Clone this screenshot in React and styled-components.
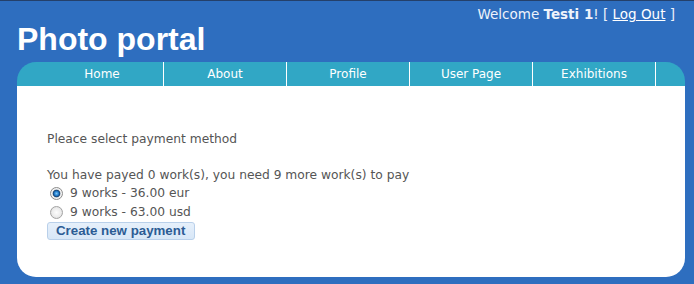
import React from "react";
import styled, { createGlobalStyle } from "styled-components";

const GlobalStyle = createGlobalStyle`
  html, body {
    margin: 0;
    padding: 0;
    background: #2e6ebf;
  }
  body {
    width: 694px;
    height: 284px;
    overflow: hidden;
    font-family: "DejaVu Sans", Verdana, sans-serif;
  }
`;

const Page = styled.div`
  box-sizing: border-box;
  width: 694px;
  height: 284px;
  border-top: 1px solid #24406a;
  background: #2e6ebf;
  padding: 0 9px 0 17px;
  display: flex;
  flex-direction: column;
`;

const Header = styled.header`
  height: 61px;
  display: flex;
  flex-direction: column;
`;

const Welcome = styled.div`
  margin-top: 5px;
  padding-right: 10px;
  text-align: right;
  font-size: 13.5px;
  line-height: 16px;
  color: #eef3fb;
`;

const LogOut = styled.a`
  color: #ffffff;
  text-decoration: underline;
`;

const Title = styled.h1`
  margin: 1px 0 0 0;
  font-family: "Liberation Sans", Arial, sans-serif;
  font-weight: bold;
  font-size: 32px;
  line-height: 32px;
  color: #ffffff;
`;

const Nav = styled.nav`
  height: 24px;
  background: #31a7c5;
  border-radius: 19px 19px 0 0;
  display: flex;
  padding-left: 24px;
`;

const Tab = styled.a`
  box-sizing: border-box;
  width: 123px;
  border-right: 1px solid #ffffff;
  text-align: center;
  font-size: 12px;
  line-height: 24px;
  color: #ffffff;
  text-decoration: none;
`;

const Content = styled.main`
  height: 191px;
  background: #ffffff;
  border-radius: 0 0 19px 19px;
  box-sizing: border-box;
  padding: 44px 30px 0 30px;
  color: #555555;
  font-size: 12.25px;
  line-height: 18px;
`;

const Para = styled.p`
  margin: 0 0 18px 0;
`;

const Line = styled.div`
  line-height: 18px;
`;

const RadioRow = styled.label`
  display: flex;
  align-items: center;
  height: 19px;
  line-height: 19px;
`;

const Radio = styled.input.attrs({ type: "radio" })`
  appearance: none;
  -webkit-appearance: none;
  box-sizing: border-box;
  width: 13px;
  height: 13px;
  margin: 0 7px 0 3px;
  border-radius: 50%;
  border: 1px solid #a3a3a3;
  background: radial-gradient(circle, #fdfdfd 0, #ececec 55%, #d2d2d2 100%);
  &:checked {
    border-color: #8c8c8c;
    background: radial-gradient(
      circle,
      #7cc6f5 0,
      #1f78c8 2.2px,
      #173f6c 3.4px,
      #e4e4e4 4.2px,
      #f4f4f4 5px,
      #d4d4d4 100%
    );
  }
`;

const Button = styled.button`
  box-sizing: border-box;
  margin-top: -1px;
  width: 148px;
  height: 18px;
  padding: 0 0 0 8px;
  text-align: left;
  border: 1px solid #b9d0ea;
  border-radius: 3px;
  background: linear-gradient(#e6f0fb, #d8e7f7);
  color: #2c5c94;
  font-family: "Liberation Sans", Arial, sans-serif;
  font-weight: bold;
  font-size: 13.3px;
  line-height: 16px;
`;

const tabs = ["Home", "About", "Profile", "User Page", "Exhibitions"];

export default function App() {
  return (
    <>
      <GlobalStyle />
      <Page>
        <Header>
          <Welcome>
            Welcome <b>Testi 1</b>! [ <LogOut href="#">Log Out</LogOut> ]
          </Welcome>
          <Title>Photo portal</Title>
        </Header>
        <Nav>
          {tabs.map((t) => (
            <Tab key={t} href="#">
              {t}
            </Tab>
          ))}
        </Nav>
        <Content>
          <Para>Pleace select payment method</Para>
          <Line>You have payed 0 work(s), you need 9 more work(s) to pay</Line>
          <RadioRow>
            <Radio name="pay" defaultChecked />
            9 works - 36.00 eur
          </RadioRow>
          <RadioRow>
            <Radio name="pay" />
            9 works - 63.00 usd
          </RadioRow>
          <Button>Create new payment</Button>
        </Content>
      </Page>
    </>
  );
}
